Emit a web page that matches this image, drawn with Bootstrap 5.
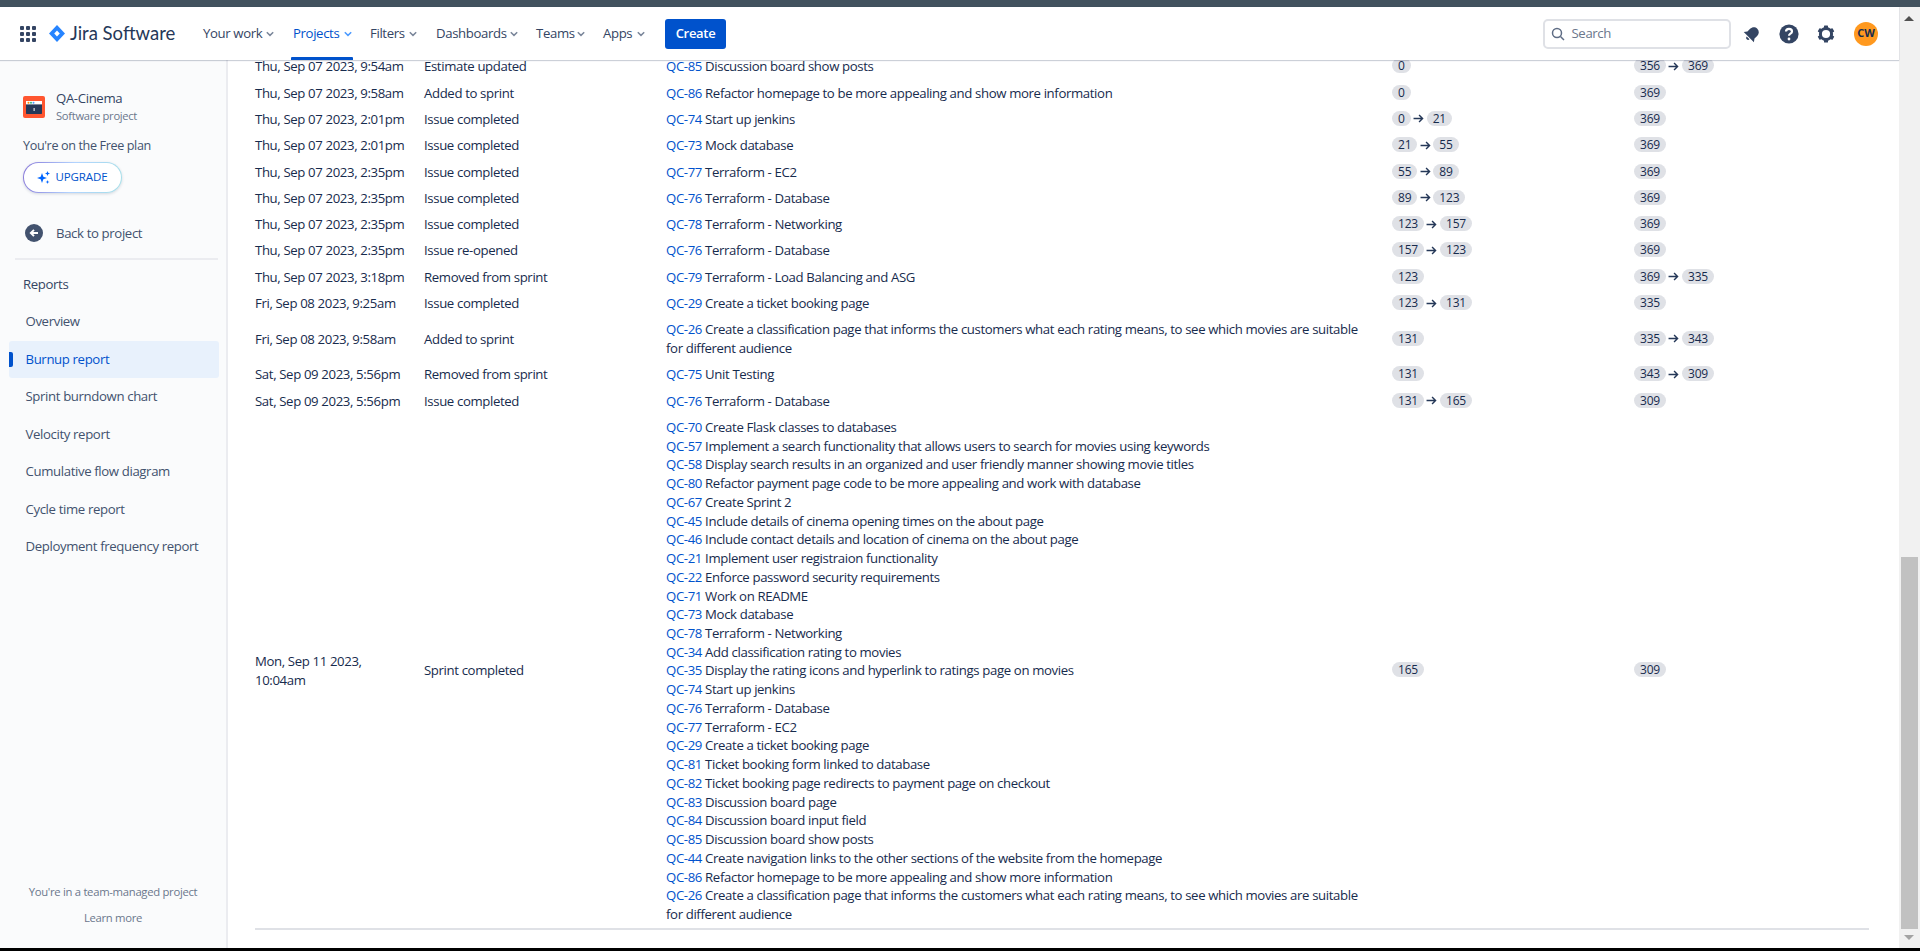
<!DOCTYPE html>
<html lang="en">
<head>
<meta charset="utf-8">
<title>Burnup report - Jira Software</title>
<link href="https://cdn.jsdelivr.net/npm/bootstrap@5.3.0/dist/css/bootstrap.min.css" rel="stylesheet">
<style>
html,body{height:951px;overflow:hidden}
body{font-family:"Open Sans","Noto Sans",sans-serif;font-size:13.2px;letter-spacing:-.37px;color:#172b4d;background:#fff;line-height:18.7px}
a{text-decoration:none}
.top-strip{height:7px;background:#42525e;flex:none}
.win-edge{height:3px;background:#000;flex:none}
.page-col{min-width:0}
.jira-head{height:53px;background:#fff;box-shadow:0 1px 1px rgba(9,30,66,.18),0 0 1px rgba(9,30,66,.2);z-index:2;position:relative;padding:0 21px 0 20px;flex:none}
.brand-name{font-family:Lato,sans-serif;font-size:18.500px;letter-spacing:0;color:#253858;margin-left:5px;font-weight:400;width:117px;white-space:nowrap}
.brand-logo{margin-left:13px}
.top-links{margin-left:16px;height:53px}
.top-link{color:#344563;height:53px;position:relative;white-space:nowrap;display:flex;align-items:center;justify-content:space-between}
.top-link.is-on{color:#0052cc}
.top-link.is-on::after{content:"";position:absolute;left:-2px;right:-1px;bottom:0;height:3px;background:#0052cc;border-radius:1px 1px 0 0}
.lk1{width:71px;margin-right:19px}.lk2{width:59px;margin-right:18px}.lk3{width:47px;margin-right:19px}.lk4{width:82px;margin-right:18px}.lk5{width:49px;margin-right:18px}.lk6{width:42px;margin-right:20px}
.make-btn{background:#0052cc;color:#fff;font-weight:600;border-radius:3px;width:61px;height:30px;font-size:13px;padding:0;border:0;letter-spacing:-.3px}
.find-box{width:188px;height:30px;border:2px solid #dfe1e6;border-radius:5px;color:#6b778c;padding-left:6px;gap:7px;background:#fff}
.head-icons{margin-left:2.500px}
.ic-slot{width:37px;display:flex;justify-content:center}
.me-badge{width:24px;height:24px;border-radius:50%;background:#ff991f;color:#172b4d;font-size:11px;font-weight:700;letter-spacing:0;margin-left:10px}
.side-rail{width:228px;flex:none;background:#fafbfc;border-right:2px solid #ebecf0;padding:29px 8px 0 9px;height:888px}
.proj-logo{width:22px;height:22px;margin-left:14px;flex:none}
.proj-name{color:#344563;line-height:18px}
.proj-sub{font-size:11.200px;color:#6b778c;line-height:18px;letter-spacing:-.3px}
.plan-line{font-size:12.600px;color:#42526e;margin:12px 0 0 14px;line-height:18px}
.up-pill{width:99px;height:31px;margin:7px 0 0 14px;border:1px solid transparent;border-radius:16px;background:linear-gradient(#fff,#fff) padding-box,linear-gradient(100deg,#8777d9,#b3d4ff 50%,#a5dfe8) border-box;box-shadow:0 1px 3px rgba(9,30,66,.16);color:#0052cc;font-size:11.500px;font-weight:500;letter-spacing:-.1px;gap:5px}
.back-row{margin:31px 0 0 16px;gap:13px;height:18px}
.rail-rule{height:2px;background:#ebecf0;margin:16px 0 0 6px;width:203px}
.rail-title{color:#344563;margin:14px 0 0 14px;font-weight:500;line-height:20px}
.rail-items{margin-top:9px}
.rail-item{height:37.500px;padding-left:16.500px;color:#42526e;display:flex;align-items:center;position:relative;border-radius:3px;width:210px;white-space:nowrap}
.rail-item.is-on{background:#e8f1fc;color:#0052cc}
.rail-item.is-on::before{content:"";position:absolute;left:0;top:11px;width:4px;height:15px;background:#0052cc;border-radius:0 2px 2px 0}
.rail-foot{font-size:11.300px;color:#6b778c;text-align:center;width:208px;line-height:18px;letter-spacing:-.3px}
.rail-foot div+div{margin-top:8px}
.report-pane{min-width:0;padding:0 30px 0 27px;height:888px}
.log-table{table-layout:fixed;width:1614px;margin-top:-6.450px;border-collapse:collapse;border-bottom:2px solid #dfe1e6}
.log-table td{padding:3.800px 16px 3.800px 0;vertical-align:middle;border:0}
.log-table a{color:#0052cc}
.issue-stack{line-height:18.730px}
.cw1{width:169px}.cw2{width:242px}.cw3{width:726px}.cw4{width:242px}
.num-pill{display:inline-block;background:#dfe1e6;border-radius:8px;font-size:12px;line-height:15px;height:15px;padding:0 6px;min-width:18px;text-align:center;color:#172b4d;vertical-align:1px;letter-spacing:-.2px}
.flow-arrow{display:inline-block;width:11px;height:11px;margin:0 2.500px;vertical-align:-.5px}
.fake-bar{width:21px;background:#f1f1f1;flex:none;position:relative;padding:550px 2px 19px}
.fake-thumb{height:372px;background:#c1c1c1}
.sb-up,.sb-down{position:absolute;left:5px;width:0;height:0;border-left:5px solid transparent;border-right:5px solid transparent}
.sb-up{top:9px;border-bottom:5px solid #505050}
.sb-down{bottom:8px;border-top:5px solid #a3a3a3}
</style>
</head>
<body class="d-flex flex-column">
<div class="top-strip"></div>
<div class="d-flex flex-grow-1" style="min-height:0">
  <div class="page-col flex-grow-1 d-flex flex-column">
    <header class="jira-head d-flex align-items-center">
      <svg width="16" height="16" viewBox="0 0 16 16" fill="#344563"><rect x="0" y="0" width="4" height="4" rx="1"/><rect x="6" y="0" width="4" height="4" rx="1"/><rect x="12" y="0" width="4" height="4" rx="1"/><rect x="0" y="6" width="4" height="4" rx="1"/><rect x="6" y="6" width="4" height="4" rx="1"/><rect x="12" y="6" width="4" height="4" rx="1"/><rect x="0" y="12" width="4" height="4" rx="1"/><rect x="6" y="12" width="4" height="4" rx="1"/><rect x="12" y="12" width="4" height="4" rx="1"/></svg>
      <svg class="brand-logo" width="16" height="17" viewBox="0 0 16 17"><path d="M8 0 16 8.500 8 17 0 8.500Z" fill="#2684ff"/><path d="M8 5.600 10.800 8.500 8 11.400 5.200 8.500Z" fill="#fff"/></svg>
      <span class="brand-name">Jira Software</span>
      <nav class="top-links d-flex align-items-center">
        <a class="top-link lk1" href="#">Your work<svg width="8" height="8" viewBox="0 0 8 8"><path d="M.8 2.200 4 5.400 7.200 2.200" fill="none" stroke="#7a869a" stroke-width="1.500"/></svg></a>
        <a class="top-link lk2 is-on" href="#">Projects<svg width="8" height="8" viewBox="0 0 8 8"><path d="M.8 2.200 4 5.400 7.200 2.200" fill="none" stroke="#4c9aff" stroke-width="1.500"/></svg></a>
        <a class="top-link lk3" href="#">Filters<svg width="8" height="8" viewBox="0 0 8 8"><path d="M.8 2.200 4 5.400 7.200 2.200" fill="none" stroke="#7a869a" stroke-width="1.500"/></svg></a>
        <a class="top-link lk4" href="#">Dashboards<svg width="8" height="8" viewBox="0 0 8 8"><path d="M.8 2.200 4 5.400 7.200 2.200" fill="none" stroke="#7a869a" stroke-width="1.500"/></svg></a>
        <a class="top-link lk5" href="#">Teams<svg width="8" height="8" viewBox="0 0 8 8"><path d="M.8 2.200 4 5.400 7.200 2.200" fill="none" stroke="#7a869a" stroke-width="1.500"/></svg></a>
        <a class="top-link lk6" href="#">Apps<svg width="8" height="8" viewBox="0 0 8 8"><path d="M.8 2.200 4 5.400 7.200 2.200" fill="none" stroke="#7a869a" stroke-width="1.500"/></svg></a>
      </nav>
      <button class="make-btn btn" type="button">Create</button>
      <div class="flex-grow-1"></div>
      <div class="find-box d-flex align-items-center">
        <svg width="14" height="14" viewBox="0 0 14 14" fill="none" stroke="#5e6c84" stroke-width="1.500"><circle cx="6" cy="6" r="4.500"/><path d="M9.500 9.500 13 13"/></svg>
        <span>Search</span>
      </div>
      <div class="head-icons d-flex align-items-center">
        <span class="ic-slot"><svg width="18" height="18" viewBox="0 0 18 18" fill="#344563"><g transform="rotate(45 9 9)"><path d="M9 1.500c-3 0-5 2.300-5 5.200v3.800L1.800 13.500h14.400L14 10.500V6.700c0-2.900-2-5.200-5-5.200Z"/><path d="M7 14.500h4a2 2 0 0 1-4 0Z"/></g></svg></span>
        <span class="ic-slot"><svg width="20" height="20" viewBox="0 0 20 20"><circle cx="10" cy="10" r="9.600" fill="#344563"/><path d="M7 7.600c0-1.800 1.300-2.800 3-2.800s3 1 3 2.600c0 2.300-3 2.300-3 4.300" fill="none" stroke="#fff" stroke-width="2.200"/><circle cx="10" cy="15" r="1.400" fill="#fff"/></svg></span>
        <span class="ic-slot"><svg width="18" height="18" viewBox="0 0 18 18" fill="#344563"><circle cx="9" cy="9" r="5.600" fill="none" stroke="#344563" stroke-width="3"/><rect x="7" y="0.500" width="4" height="3.500" rx=".6"/><rect x="7" y="14" width="4" height="3.500" rx=".6"/><rect x="7" y="0.500" width="4" height="3.500" rx=".6" transform="rotate(60 9 9)"/><rect x="7" y="0.500" width="4" height="3.500" rx=".6" transform="rotate(120 9 9)"/><rect x="7" y="0.500" width="4" height="3.500" rx=".6" transform="rotate(240 9 9)"/><rect x="7" y="0.500" width="4" height="3.500" rx=".6" transform="rotate(300 9 9)"/></svg></span>
        <span class="me-badge d-flex align-items-center justify-content-center">CW</span>
      </div>
    </header>
    <div class="d-flex flex-grow-1" style="min-height:0">
      <aside class="side-rail d-flex flex-column">
        <div class="d-flex align-items-center" style="gap:11px">
          <svg class="proj-logo" viewBox="0 0 22 22"><rect width="22" height="22" rx="2" fill="#ff5630"/><path d="M3 7c0-1 .6-2 1.600-2h12.800c1 0 1.600 1 1.600 2v10c0 .6-.4 1-1 1H4c-.6 0-1-.4-1-1Z" fill="#253858"/><rect x="3" y="5" width="16" height="3.400" fill="#fff"/><circle cx="5.500" cy="6.700" r="1" fill="#ff8b00"/><circle cx="8" cy="6.700" r="1" fill="#36b37e"/><circle cx="10.500" cy="6.700" r="1" fill="#4c9aff"/><rect x="10.600" y="12" width="1" height="3" fill="#fff"/></svg>
          <div><div class="proj-name">QA-Cinema</div><div class="proj-sub">Software project</div></div>
        </div>
        <div class="plan-line">You're on the Free plan</div>
        <a class="up-pill d-flex align-items-center justify-content-center" href="#"><svg width="13" height="13" viewBox="0 0 13 13" fill="#0065ff"><path d="M5 2 6.300 5.700 10 7 6.300 8.300 5 12 3.700 8.300 0 7 3.700 5.700Z"/><path d="M10.500 0 11.200 1.800 13 2.500 11.200 3.200 10.500 5 9.800 3.200 8 2.500 9.800 1.800Z"/><path d="M10.500 9 11 10.500 12.500 11 11 11.500 10.500 13 10 11.500 8.500 11 10 10.500Z"/></svg>UPGRADE</a>
        <a class="back-row d-flex align-items-center" href="#" style="color:#42526e"><svg width="18" height="18" viewBox="0 0 18 18"><circle cx="9" cy="9" r="9" fill="#42526e"/><path d="M13 9H6M9 5.800 5.800 9 9 12.200" fill="none" stroke="#fff" stroke-width="1.900"/></svg>Back to project</a>
        <div class="rail-rule"></div>
        <div class="rail-title">Reports</div>
        <div class="rail-items">
          <a class="rail-item" href="#">Overview</a>
          <a class="rail-item is-on" href="#">Burnup report</a>
          <a class="rail-item" href="#">Sprint burndown chart</a>
          <a class="rail-item" href="#">Velocity report</a>
          <a class="rail-item" href="#">Cumulative flow diagram</a>
          <a class="rail-item" href="#">Cycle time report</a>
          <a class="rail-item" href="#">Deployment frequency report</a>
        </div>
        <div class="flex-grow-1"></div>
        <div class="rail-foot" style="padding-bottom:21px"><div>You're in a team-managed project</div><div>Learn more</div></div>
      </aside>
      <main class="report-pane flex-grow-1 overflow-hidden">
        <table class="log-table">
          <colgroup><col class="cw1"><col class="cw2"><col class="cw3"><col class="cw4"><col></colgroup>
          <tbody>
          <tr><td>Thu, Sep 07 2023, 9:54am</td><td>Estimate updated</td><td><a href="#">QC-85</a> Discussion board show posts</td><td><span class="num-pill">0</span></td><td><span class="num-pill">356</span><svg class="flow-arrow" width="10" height="10" viewBox="0 0 10 10" fill="none" stroke="#253858" stroke-width="1.300"><path d="M.5 5h8M5.500 1.800 8.700 5 5.500 8.200"/></svg><span class="num-pill">369</span></td></tr>
          <tr><td>Thu, Sep 07 2023, 9:58am</td><td>Added to sprint</td><td><a href="#">QC-86</a> Refactor homepage to be more appealing and show more information</td><td><span class="num-pill">0</span></td><td><span class="num-pill">369</span></td></tr>
          <tr><td>Thu, Sep 07 2023, 2:01pm</td><td>Issue completed</td><td><a href="#">QC-74</a> Start up jenkins</td><td><span class="num-pill">0</span><svg class="flow-arrow" width="10" height="10" viewBox="0 0 10 10" fill="none" stroke="#253858" stroke-width="1.300"><path d="M.5 5h8M5.500 1.800 8.700 5 5.500 8.200"/></svg><span class="num-pill">21</span></td><td><span class="num-pill">369</span></td></tr>
          <tr><td>Thu, Sep 07 2023, 2:01pm</td><td>Issue completed</td><td><a href="#">QC-73</a> Mock database</td><td><span class="num-pill">21</span><svg class="flow-arrow" width="10" height="10" viewBox="0 0 10 10" fill="none" stroke="#253858" stroke-width="1.300"><path d="M.5 5h8M5.500 1.800 8.700 5 5.500 8.200"/></svg><span class="num-pill">55</span></td><td><span class="num-pill">369</span></td></tr>
          <tr><td>Thu, Sep 07 2023, 2:35pm</td><td>Issue completed</td><td><a href="#">QC-77</a> Terraform - EC2</td><td><span class="num-pill">55</span><svg class="flow-arrow" width="10" height="10" viewBox="0 0 10 10" fill="none" stroke="#253858" stroke-width="1.300"><path d="M.5 5h8M5.500 1.800 8.700 5 5.500 8.200"/></svg><span class="num-pill">89</span></td><td><span class="num-pill">369</span></td></tr>
          <tr><td>Thu, Sep 07 2023, 2:35pm</td><td>Issue completed</td><td><a href="#">QC-76</a> Terraform - Database</td><td><span class="num-pill">89</span><svg class="flow-arrow" width="10" height="10" viewBox="0 0 10 10" fill="none" stroke="#253858" stroke-width="1.300"><path d="M.5 5h8M5.500 1.800 8.700 5 5.500 8.200"/></svg><span class="num-pill">123</span></td><td><span class="num-pill">369</span></td></tr>
          <tr><td>Thu, Sep 07 2023, 2:35pm</td><td>Issue completed</td><td><a href="#">QC-78</a> Terraform - Networking</td><td><span class="num-pill">123</span><svg class="flow-arrow" width="10" height="10" viewBox="0 0 10 10" fill="none" stroke="#253858" stroke-width="1.300"><path d="M.5 5h8M5.500 1.800 8.700 5 5.500 8.200"/></svg><span class="num-pill">157</span></td><td><span class="num-pill">369</span></td></tr>
          <tr><td>Thu, Sep 07 2023, 2:35pm</td><td>Issue re-opened</td><td><a href="#">QC-76</a> Terraform - Database</td><td><span class="num-pill">157</span><svg class="flow-arrow" width="10" height="10" viewBox="0 0 10 10" fill="none" stroke="#253858" stroke-width="1.300"><path d="M.5 5h8M5.500 1.800 8.700 5 5.500 8.200"/></svg><span class="num-pill">123</span></td><td><span class="num-pill">369</span></td></tr>
          <tr><td>Thu, Sep 07 2023, 3:18pm</td><td>Removed from sprint</td><td><a href="#">QC-79</a> Terraform - Load Balancing and ASG</td><td><span class="num-pill">123</span></td><td><span class="num-pill">369</span><svg class="flow-arrow" width="10" height="10" viewBox="0 0 10 10" fill="none" stroke="#253858" stroke-width="1.300"><path d="M.5 5h8M5.500 1.800 8.700 5 5.500 8.200"/></svg><span class="num-pill">335</span></td></tr>
          <tr><td>Fri, Sep 08 2023, 9:25am</td><td>Issue completed</td><td><a href="#">QC-29</a> Create a ticket booking page</td><td><span class="num-pill">123</span><svg class="flow-arrow" width="10" height="10" viewBox="0 0 10 10" fill="none" stroke="#253858" stroke-width="1.300"><path d="M.5 5h8M5.500 1.800 8.700 5 5.500 8.200"/></svg><span class="num-pill">131</span></td><td><span class="num-pill">335</span></td></tr>
          <tr><td>Fri, Sep 08 2023, 9:58am</td><td>Added to sprint</td><td><a href="#">QC-26</a> Create a classification page that informs the customers what each rating means, to see which movies are suitable<br>for different audience</td><td><span class="num-pill">131</span></td><td><span class="num-pill">335</span><svg class="flow-arrow" width="10" height="10" viewBox="0 0 10 10" fill="none" stroke="#253858" stroke-width="1.300"><path d="M.5 5h8M5.500 1.800 8.700 5 5.500 8.200"/></svg><span class="num-pill">343</span></td></tr>
          <tr><td>Sat, Sep 09 2023, 5:56pm</td><td>Removed from sprint</td><td><a href="#">QC-75</a> Unit Testing</td><td><span class="num-pill">131</span></td><td><span class="num-pill">343</span><svg class="flow-arrow" width="10" height="10" viewBox="0 0 10 10" fill="none" stroke="#253858" stroke-width="1.300"><path d="M.5 5h8M5.500 1.800 8.700 5 5.500 8.200"/></svg><span class="num-pill">309</span></td></tr>
          <tr><td>Sat, Sep 09 2023, 5:56pm</td><td>Issue completed</td><td><a href="#">QC-76</a> Terraform - Database</td><td><span class="num-pill">131</span><svg class="flow-arrow" width="10" height="10" viewBox="0 0 10 10" fill="none" stroke="#253858" stroke-width="1.300"><path d="M.5 5h8M5.500 1.800 8.700 5 5.500 8.200"/></svg><span class="num-pill">165</span></td><td><span class="num-pill">309</span></td></tr>
          <tr><td>Mon, Sep 11 2023,<br>10:04am</td><td>Sprint completed</td><td class="issue-stack">
            <a href="#">QC-70</a> Create Flask classes to databases<br>
            <a href="#">QC-57</a> Implement a search functionality that allows users to search for movies using keywords<br>
            <a href="#">QC-58</a> Display search results in an organized and user friendly manner showing movie titles<br>
            <a href="#">QC-80</a> Refactor payment page code to be more appealing and work with database<br>
            <a href="#">QC-67</a> Create Sprint 2<br>
            <a href="#">QC-45</a> Include details of cinema opening times on the about page<br>
            <a href="#">QC-46</a> Include contact details and location of cinema on the about page<br>
            <a href="#">QC-21</a> Implement user registraion functionality<br>
            <a href="#">QC-22</a> Enforce password security requirements<br>
            <a href="#">QC-71</a> Work on README<br>
            <a href="#">QC-73</a> Mock database<br>
            <a href="#">QC-78</a> Terraform - Networking<br>
            <a href="#">QC-34</a> Add classification rating to movies<br>
            <a href="#">QC-35</a> Display the rating icons and hyperlink to ratings page on movies<br>
            <a href="#">QC-74</a> Start up jenkins<br>
            <a href="#">QC-76</a> Terraform - Database<br>
            <a href="#">QC-77</a> Terraform - EC2<br>
            <a href="#">QC-29</a> Create a ticket booking page<br>
            <a href="#">QC-81</a> Ticket booking form linked to database<br>
            <a href="#">QC-82</a> Ticket booking page redirects to payment page on checkout<br>
            <a href="#">QC-83</a> Discussion board page<br>
            <a href="#">QC-84</a> Discussion board input field<br>
            <a href="#">QC-85</a> Discussion board show posts<br>
            <a href="#">QC-44</a> Create navigation links to the other sections of the website from the homepage<br>
            <a href="#">QC-86</a> Refactor homepage to be more appealing and show more information<br>
            <a href="#">QC-26</a> Create a classification page that informs the customers what each rating means, to see which movies are suitable<br>for different audience
          </td><td><span class="num-pill">165</span></td><td><span class="num-pill">309</span></td></tr>
          </tbody>
        </table>
      </main>
    </div>
  </div>
  <div class="fake-bar"><span class="sb-up"></span><div class="fake-thumb"></div><span class="sb-down"></span></div>
</div>
<div class="win-edge"></div>
</body>
</html>
